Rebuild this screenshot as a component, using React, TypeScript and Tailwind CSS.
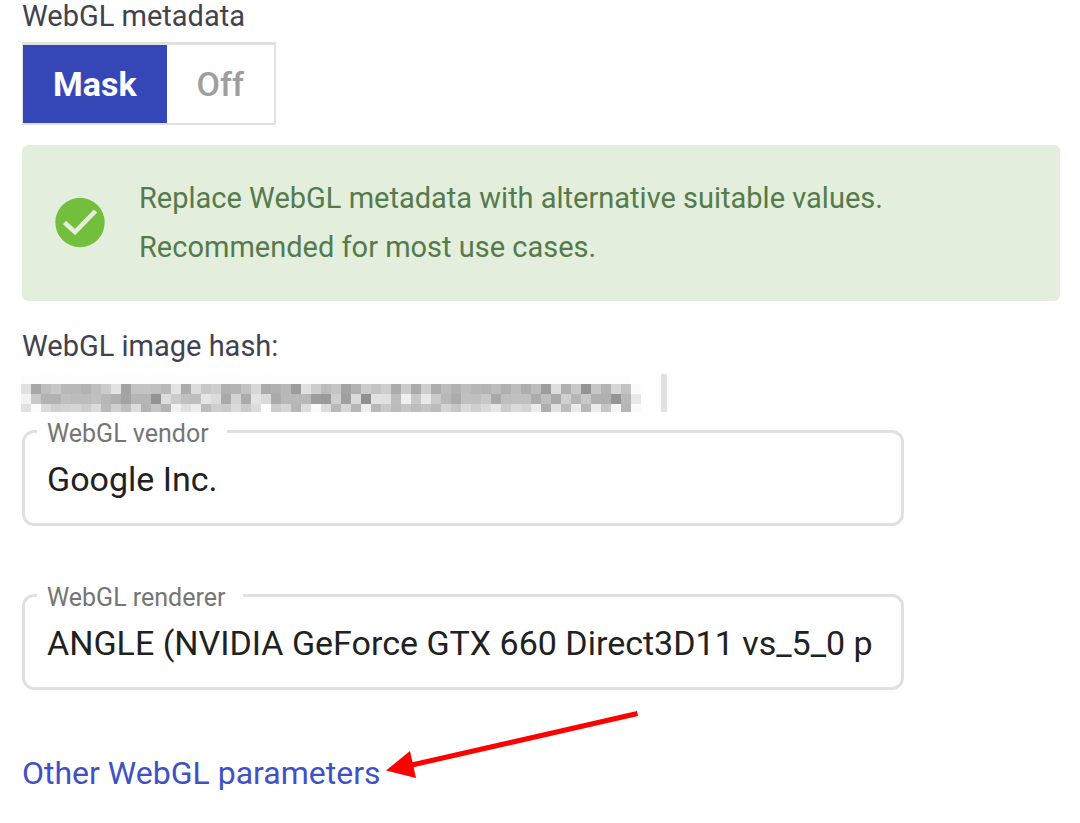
import { useState } from "react";

const HASH_ROWS = [
  "E0 A6 BE C8 B8 B8 B2 BE CC E2 A3 C3 C3 C0 B9 E3 AB DC C8 CE B0 B4 C2 D8 AB B0 B8 9C E0 CD BC C6 A3 B2 CC C3 CE AB CC AA CE AD BC B1 BE B6 B3 BC B0 BD AD BC 9D DD B0 C8 94 C6 B2 D6 C3 FB",
  "F2 C8 B2 B2 C0 BC BC C0 B7 AF A3 B5 B5 93 DD CB C0 BD E5 DC A9 D4 AC E4 D9 AA B8 B8 B8 9C 9A CE 9E DA 91 E2 E0 BD EF C8 E8 CB B8 AB C0 C0 C8 A9 BE C0 C0 AC BE AA D0 B6 C8 B0 B0 94 B8 E8",
  "E0 FB DA CE D2 D5 CD DB BA CF BE DC B4 C6 B4 F1 DF EC BC CE CA DA CA DC FF CC D6 B6 DC FA DC B8 D6 B6 ED B8 CA BC C6 BC C4 BC D4 C6 DA CF DA E6 CC DA D4 EB AF E0 BC EB B8 EB C6 F4 B5 FA",
].map((row) => row.split(" "));

function ObscuredHash() {
  return (
    <svg width="620" height="38" viewBox="0 0 620 38" shapeRendering="crispEdges" aria-hidden="true">
      <rect width="610" height="10" fill="#fdfdfd" />
      {HASH_ROWS.map((row, y) =>
        row.map((shade, x) => (
          <rect key={`${y}-${x}`} x={x * 10} y={10 + y * 10} width="10" height="10" fill={`#${shade}${shade}${shade}`} />
        )),
      )}
    </svg>
  );
}

function CheckBadge() {
  return (
    <svg className="size-[50px] shrink-0" viewBox="0 0 50 50" aria-hidden="true">
      <circle cx="25" cy="24.5" r="24.7" fill="#73be3c" />
      <path d="M9.5 24.5 20 34 40.5 13" fill="none" stroke="#e3efdc" strokeWidth="4.6" />
    </svg>
  );
}

function OutlinedField({ id, label, value }: { id: string; label: string; value: string }) {
  const [text, setText] = useState(value);
  return (
    <fieldset className="w-[85%] min-w-0 rounded-xl border-3 border-[#e0e0e0] pr-[22px] pb-[13px] pl-3">
      <legend className="pt-1.5 pr-[18px] pl-2.5 text-[25px] leading-7 text-[#757575]">
        <label htmlFor={id}>{label}</label>
      </legend>
      <input
        id={id}
        type="text"
        value={text}
        onChange={(e) => setText(e.target.value)}
        className="block h-[62px] w-full bg-transparent pl-2.5 text-[34px] text-[#212121] outline-none"
      />
    </fieldset>
  );
}

export default function App() {
  const [mode, setMode] = useState("Mask");
  return (
    <main className="bg-white pr-5 pl-[22px] font-[Roboto,sans-serif] text-[29px] text-[#42424f]">
      <h2 id="metadata-label" className="leading-8">WebGL metadata</h2>

      <div role="group" aria-labelledby="metadata-label" className="mt-2.5 flex w-fit border-2 border-t-3 border-l border-[#e0e0e0]">
        {["Mask", "Off"].map((option) => (
          <button
            key={option}
            type="button"
            aria-pressed={mode === option}
            onClick={() => setMode(option)}
            className={
              mode === option
                ? "h-[78px] bg-[#3547b7] px-[30px] text-[34px] font-bold text-white"
                : "h-[78px] bg-white px-[30px] text-[34px] font-medium text-[#9e9e9e]"
            }
          >
            {option}
          </button>
        ))}
      </div>

      <div role="status" className="mt-5 flex items-center gap-[34px] rounded-md bg-[#e3efdc] py-[29px] pr-8 pl-[33px] text-[#557a4c]">
        <CheckBadge />
        <p className="leading-[49px]">
          Replace WebGL metadata with alternative suitable values.
          <br />
          Recommended for most use cases.
        </p>
      </div>

      <h2 className="mt-[29px] leading-8">WebGL image hash:</h2>
      <div className="-ml-px mt-3 flex gap-5">
        <ObscuredHash />
        <span className="w-1.5 bg-[#e0e0e0]" />
      </div>

      <div className="mt-0.5 flex flex-col gap-[52px]">
        <OutlinedField id="vendor" label="WebGL vendor" value="Google Inc." />
        <OutlinedField id="renderer" label="WebGL renderer" value="ANGLE (NVIDIA GeForce GTX 660 Direct3D11 vs_5_0 p" />
      </div>

      <div className="relative mt-[63px] w-fit">
        <a href="#parameters" className="block text-[32px] leading-10 text-[#3f51c5]">Other WebGL parameters</a>
        <svg className="absolute -top-[42px] left-[364px] h-[68px] w-[253px]" viewBox="386 711 253 68" aria-hidden="true">
          <path d="M412 765 637.5 713.5" stroke="#f00" strokeWidth="5" />
          <path d="M386 770.5 410 751 416 778Z" fill="#f00" />
        </svg>
      </div>
    </main>
  );
}
